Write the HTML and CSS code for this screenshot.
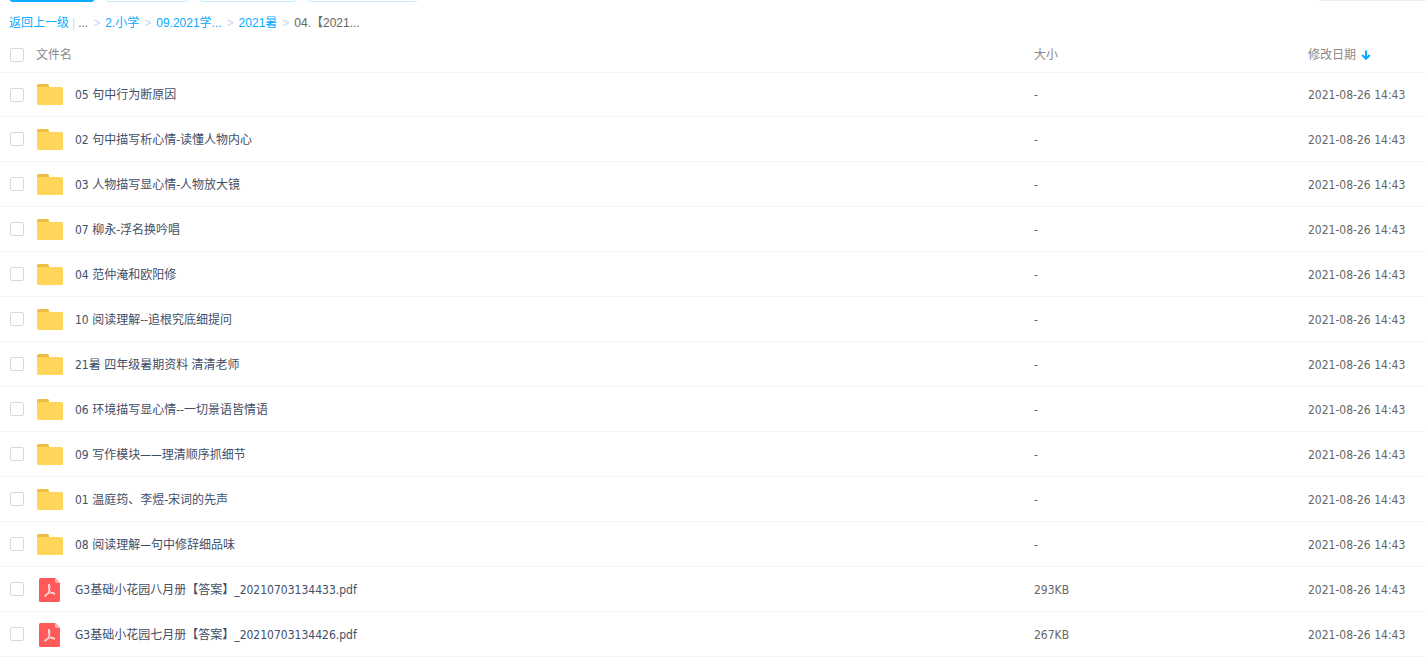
FILE: index.html
```html
<!DOCTYPE html>
<html lang="zh-CN">

<head>
    <meta charset="UTF-8">
    <meta name="viewport" content="width=device-width, initial-scale=1.0">
    <title>文件列表</title>

    <link rel="stylesheet" href="styles.css">
</head>

<body>

    <!-- icons used by the rows -->
    <svg class="sprite" aria-hidden="true">
        <symbol id="icon-folder" viewBox="0 0 26 22">
            <path fill="#edbd45" d="M1.5 0H10.500Q12 0 12 1.500V5H0V1.500Q0 0 1.500 0z" />
            <path fill="#ffd659" d="M0 3H24.500Q26 3 26 4.500V19.500Q26 21 24.500 21H1.500Q0 21 0 19.500z" />
        </symbol>
        <symbol id="icon-pdf" viewBox="0 0 26 24">
            <path fill="#ff5959" d="M3.500 0H18L23 5V22.500Q23 24 21.500 24H3.500Q2 24 2 22.500V1.500Q2 0 3.500 0z" />
            <path fill="#ffacac" d="M18 0L23 5H19.500Q18 5 18 3.500z" />
            <path fill="none" stroke="#fff" stroke-width="1" stroke-linecap="round" stroke-linejoin="round"
                d="M11.800 6.500C13.300 6 13 9.500 12.300 12C11.300 15 9.500 18.500 8 18.300C6.800 17.500 9.500 15.500 12.500 15C15 14.500 18.300 14.500 17.800 16C16.500 17 13.200 14 12.300 12C11.600 10 11 7.500 11.800 6.500" />
        </symbol>
    </svg>

    <div class="toolbar">
        <button type="button" class="btn btn-primary" aria-label="上传"></button>
        <button type="button" class="btn btn-folder" aria-label="新建文件夹"></button>
        <button type="button" class="btn btn-offline" aria-label="离线下载"></button>
        <button type="button" class="btn btn-device" aria-label="我的设备"></button>
        <input type="search" class="search" aria-label="搜索文件">
    </div>

    <nav class="breadcrumb">
        <a href="#">返回上一级</a>
        <span class="divider">|</span>
        <span>...</span>
        <span class="arrow">&gt;</span>
        <a href="#">2.小学</a>
        <span class="arrow">&gt;</span>
        <a href="#">09.2021学...</a>
        <span class="arrow">&gt;</span>
        <a href="#">2021暑</a>
        <span class="arrow">&gt;</span>
        <span>04.【2021...</span>
    </nav>

    <table class="file-list">
        <thead>
            <tr>
                <th class="check"><input type="checkbox" aria-label="全选"></th>
                <th class="name">文件名</th>
                <th class="size">大小</th>
                <th class="date">修改日期<svg class="sort" viewBox="0 0 10 10" aria-hidden="true">
                        <path d="M5 0.500V8.500M1.200 5L5 8.800L8.800 5" />
                    </svg></th>
            </tr>
        </thead>
        <tbody>
            <tr>
                <td class="check"><input type="checkbox" id="file-1"></td>
                <td class="name"><label for="file-1"><svg class="icon icon-folder"><use href="#icon-folder" /></svg>05 句中行为断原因</label></td>
                <td>-</td>
                <td>2021-08-26 14:43</td>
            </tr>
            <tr>
                <td class="check"><input type="checkbox" id="file-2"></td>
                <td class="name"><label for="file-2"><svg class="icon icon-folder"><use href="#icon-folder" /></svg>02 句中描写析心情-读懂人物内心</label></td>
                <td>-</td>
                <td>2021-08-26 14:43</td>
            </tr>
            <tr>
                <td class="check"><input type="checkbox" id="file-3"></td>
                <td class="name"><label for="file-3"><svg class="icon icon-folder"><use href="#icon-folder" /></svg>03 人物描写显心情-人物放大镜</label></td>
                <td>-</td>
                <td>2021-08-26 14:43</td>
            </tr>
            <tr>
                <td class="check"><input type="checkbox" id="file-4"></td>
                <td class="name"><label for="file-4"><svg class="icon icon-folder"><use href="#icon-folder" /></svg>07 柳永-浮名换吟唱</label></td>
                <td>-</td>
                <td>2021-08-26 14:43</td>
            </tr>
            <tr>
                <td class="check"><input type="checkbox" id="file-5"></td>
                <td class="name"><label for="file-5"><svg class="icon icon-folder"><use href="#icon-folder" /></svg>04 范仲淹和欧阳修</label></td>
                <td>-</td>
                <td>2021-08-26 14:43</td>
            </tr>
            <tr>
                <td class="check"><input type="checkbox" id="file-6"></td>
                <td class="name"><label for="file-6"><svg class="icon icon-folder"><use href="#icon-folder" /></svg>10 阅读理解--追根究底细提问</label></td>
                <td>-</td>
                <td>2021-08-26 14:43</td>
            </tr>
            <tr>
                <td class="check"><input type="checkbox" id="file-7"></td>
                <td class="name"><label for="file-7"><svg class="icon icon-folder"><use href="#icon-folder" /></svg>21暑 四年级暑期资料 清清老师</label></td>
                <td>-</td>
                <td>2021-08-26 14:43</td>
            </tr>
            <tr>
                <td class="check"><input type="checkbox" id="file-8"></td>
                <td class="name"><label for="file-8"><svg class="icon icon-folder"><use href="#icon-folder" /></svg>06 环境描写显心情--一切景语皆情语</label></td>
                <td>-</td>
                <td>2021-08-26 14:43</td>
            </tr>
            <tr>
                <td class="check"><input type="checkbox" id="file-9"></td>
                <td class="name"><label for="file-9"><svg class="icon icon-folder"><use href="#icon-folder" /></svg>09 写作模块——理清顺序抓细节</label></td>
                <td>-</td>
                <td>2021-08-26 14:43</td>
            </tr>
            <tr>
                <td class="check"><input type="checkbox" id="file-10"></td>
                <td class="name"><label for="file-10"><svg class="icon icon-folder"><use href="#icon-folder" /></svg>01 温庭筠、李煜-宋词的先声</label></td>
                <td>-</td>
                <td>2021-08-26 14:43</td>
            </tr>
            <tr>
                <td class="check"><input type="checkbox" id="file-11"></td>
                <td class="name"><label for="file-11"><svg class="icon icon-folder"><use href="#icon-folder" /></svg>08 阅读理解—句中修辞细品味</label></td>
                <td>-</td>
                <td>2021-08-26 14:43</td>
            </tr>
            <tr>
                <td class="check"><input type="checkbox" id="file-12"></td>
                <td class="name"><label for="file-12"><svg class="icon icon-pdf"><use href="#icon-pdf" /></svg>G3基础小花园八月册【答案】_20210703134433.pdf</label></td>
                <td>293KB</td>
                <td>2021-08-26 14:43</td>
            </tr>
            <tr>
                <td class="check"><input type="checkbox" id="file-13"></td>
                <td class="name"><label for="file-13"><svg class="icon icon-pdf"><use href="#icon-pdf" /></svg>G3基础小花园七月册【答案】_20210703134426.pdf</label></td>
                <td>267KB</td>
                <td>2021-08-26 14:43</td>
            </tr>
        </tbody>
    </table>

</body>

</html>
```

FILE: styles.css
```css
* {
    box-sizing: border-box;
}

body {
    margin: 0;
    background-color: #fff;
    color: #666;
    font-family: "DejaVu Sans Condensed", "Noto Sans CJK SC", sans-serif;
    font-size: 12px;
    line-height: 18px;
}

a {
    color: #09aaff;
    text-decoration: none;
}

.sprite {
    display: none;
}

/* only the lower edge of the toolbar shows above the list */
.toolbar {
    display: flex;
    align-items: flex-end;
    gap: 10px;
    height: 2px;
    padding-left: 9px;
    overflow: hidden;
}

.btn {
    flex: none;
    height: 32px;
    border: 1px solid #c3eaff;
    border-radius: 4px;
    background-color: #fff;
    cursor: pointer;
}

.btn-primary {
    width: 86px;
    border-color: #09aaff;
    background-color: #09aaff;
}

.btn-folder {
    width: 84px;
}

.btn-offline {
    width: 98px;
}

.btn-device {
    width: 111px;
}

.search {
    width: 140px;
    height: 32px;
    margin: 0 -20px 1px auto;
    border: 1px solid #eee;
    border-radius: 16px;
}

.breadcrumb {
    display: flex;
    align-items: center;
    height: 34px;
    padding: 8px 9px 0;
    font-family: "Liberation Sans", "Noto Sans CJK SC", sans-serif;
}

.breadcrumb .divider {
    margin: 0 3px;
    color: #c4d8f4;
}

.breadcrumb .arrow {
    margin: 0 5px;
    color: #c4d8f4;
}

.file-list {
    width: 100%;
    table-layout: fixed;
    border-collapse: separate;
    border-spacing: 0;
}

th {
    height: 36px;
    padding: 2px 0 0;
    color: #888;
    font-weight: normal;
    text-align: left;
}

td {
    height: 45px;
    padding: 2px 0 0;
    border-bottom: 1px solid #f2f6fd;
}

tbody tr:first-child td {
    padding-top: 0;
    border-top: 1px solid #f2f6fd;
}

th.check {
    width: 36px;
}

th.size {
    width: 274px;
}

th.date {
    width: 118px;
}

.check {
    padding-left: 10px;
}

td.check {
    padding-top: 0;
}

input[type="checkbox"] {
    display: block;
    width: 14px;
    height: 14px;
    margin: 0;
    appearance: none;
    border: 1px solid #d4dae5;
    border-radius: 2px;
    background-color: #fff;
}

input[type="checkbox"]:checked {
    background-color: #09aaff;
}

.name label {
    display: flex;
    align-items: center;
    color: #424e67;
}

.icon {
    flex: none;
    width: 26px;
    margin: 0 12px 0 1px;
}

.icon-folder {
    height: 22px;
}

.icon-pdf {
    height: 24px;
}

.sort {
    width: 10px;
    height: 10px;
    margin-left: 5px;
    vertical-align: -1px;
    fill: none;
    stroke: #09aaff;
    stroke-width: 2;
}
```
